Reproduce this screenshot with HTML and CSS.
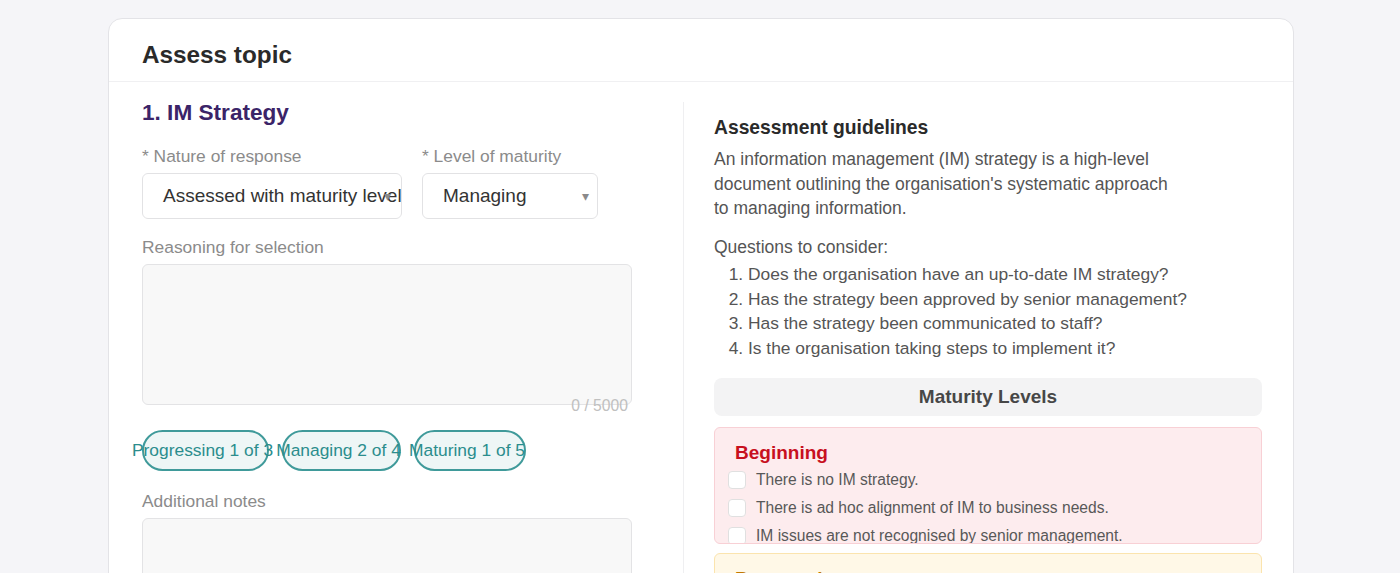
FILE: index.html
```html
<!DOCTYPE html>
<html lang="en">
<head>
    <meta charset="UTF-8">
    <meta name="viewport" content="width=device-width, initial-scale=1.0">
    <title>Assess topic</title>
    <link rel="stylesheet" href="styles.css">
</head>
<body>
    <div class="page">
        <div class="card">
            <header class="card-header">
                <h1>Assess topic</h1>
            </header>

            <div class="card-body">
                <section class="form-col">
                    <h2 class="topic-title">1. IM Strategy</h2>

                    <div class="field-row">
                        <div class="field">
                            <label class="field-label">* Nature of response</label>
                            <div class="select select-wide">
                                <span class="select-value">Assessed with maturity level</span>
                                <span class="select-arrow">&#9662;</span>
                            </div>
                        </div>
                        <div class="field">
                            <label class="field-label">* Level of maturity</label>
                            <div class="select select-narrow">
                                <span class="select-value">Managing</span>
                                <span class="select-arrow">&#9662;</span>
                            </div>
                        </div>
                    </div>

                    <div class="field">
                        <label class="field-label">Reasoning for selection</label>
                        <div class="textarea-wrap">
                            <div class="textarea"></div>
                            <span class="counter">0 / 5000</span>
                        </div>
                    </div>

                    <div class="pills">
                        <span class="pill pill-1"><span>Progressing 1 of 3</span></span>
                        <span class="pill pill-2"><span>Managing 2 of 4</span></span>
                        <span class="pill pill-3"><span>Maturing 1 of 5</span></span>
                    </div>

                    <div class="field">
                        <label class="field-label">Additional notes</label>
                        <div class="textarea"></div>
                    </div>
                </section>

                <section class="guide-col">
                    <h3 class="guide-title">Assessment guidelines</h3>
                    <p class="guide-text">An information management (IM) strategy is a high-level document outlining the organisation's systematic approach to managing information.</p>
                    <p class="guide-text guide-questions">Questions to consider:</p>
                    <ol class="question-list">
                        <li>Does the organisation have an up-to-date IM strategy?</li>
                        <li>Has the strategy been approved by senior management?</li>
                        <li>Has the strategy been communicated to staff?</li>
                        <li>Is the organisation taking steps to implement it?</li>
                    </ol>

                    <div class="levels-heading">Maturity Levels</div>

                    <div class="level level-beginning">
                        <h4 class="level-title">Beginning</h4>
                        <label class="level-item"><span class="checkbox"></span>There is no IM strategy.</label>
                        <label class="level-item"><span class="checkbox"></span>There is ad hoc alignment of IM to business needs.</label>
                        <label class="level-item"><span class="checkbox"></span>IM issues are not recognised by senior management.</label>
                    </div>

                    <div class="level level-progressing">
                        <h4 class="level-title">Progressing</h4>
                        <label class="level-item"><span class="checkbox"></span>An IM strategy is being developed.</label>
                    </div>
                </section>
            </div>
        </div>
    </div>
</body>
</html>
```

FILE: styles.css
```css
body {
    font-family: "Liberation Sans", Arial, sans-serif;
    margin: 0;
    padding: 0;
    background-color: #f5f5f8;
    height: 573px;
    overflow: hidden;
}
.page {
    padding: 18px 106px 0 108px;
}
.card {
    background-color: #fff;
    border: 1.5px solid #e3e3e7;
    border-radius: 14px;
    height: 600px;
    overflow: hidden;
}
.card-header {
    padding: 22px 33px 0;
    height: 40px;
    border-bottom: 1.5px solid #f0f0f2;
}
.card-header h1 {
    margin: 0;
    font-size: 24.3px;
    font-weight: bold;
    color: #2a2a2a;
}
.card-body {
    display: flex;
    padding: 20px 31px 0 33px;
}
.form-col {
    width: 490px;
    padding-right: 51px;
    border-right: 1.5px solid #efeff1;
}
.topic-title {
    margin: -2px 0 20px;
    font-size: 22.6px;
    font-weight: bold;
    color: #3b2468;
}
.field-row {
    display: flex;
    gap: 20px;
}
.field {
    margin-bottom: 18px;
}
.field-label {
    display: block;
    font-size: 17.4px;
    color: #8b8b8b;
    margin-bottom: 6px;
}
.select {
    position: relative;
    box-sizing: border-box;
    height: 46px;
    border: 1.5px solid #e2e2e4;
    border-radius: 6px;
    display: flex;
    align-items: center;
    padding-left: 20px;
    font-size: 19px;
    color: #333;
    overflow: hidden;
    white-space: nowrap;
}
.select-wide {
    width: 260px;
}
.select-wide .select-arrow {
    position: absolute;
    right: 10px;
    top: 14px;
}
.select-narrow {
    width: 176px;
    justify-content: space-between;
    padding-right: 8px;
}
.select-arrow {
    font-size: 14px;
    color: #8a8a8a;
}
.textarea-wrap {
    position: relative;
}
.textarea {
    box-sizing: border-box;
    height: 141px;
    background-color: #f8f8f8;
    border: 1.5px solid #e3e3e5;
    border-radius: 6px;
}
.counter {
    position: absolute;
    right: 4px;
    bottom: -10px;
    font-size: 15.7px;
    color: #c0c0c0;
}
.pills {
    display: flex;
    gap: 13px;
    margin: 25px 0 20px;
}
.pill {
    box-sizing: border-box;
    height: 41px;
    padding-right: 6px;
    border: 2px solid #3f9a9a;
    border-radius: 21px;
    background-color: #eef6f6;
    color: #2b8d8d;
    font-size: 17.4px;
    display: flex;
    align-items: center;
    justify-content: center;
    white-space: nowrap;
}
.pill-1 {
    width: 127px;
}
.pill-2 {
    width: 119px;
}
.pill-3 {
    width: 112px;
}
.guide-col {
    flex: 1;
    padding: 15px 0 0 30px;
}
.guide-title {
    margin: 0 0 8px;
    font-size: 19.3px;
    font-weight: bold;
    color: #2a2a2a;
}
.guide-text {
    margin: 0 0 14px;
    max-width: 470px;
    font-size: 17.5px;
    line-height: 24.5px;
    color: #555;
}
.guide-questions {
    margin-bottom: 3px;
}
.question-list {
    margin: 0 0 18px;
    padding-left: 34px;
    font-size: 17.4px;
    line-height: 24.5px;
    color: #555;
}
.levels-heading {
    background-color: #f3f3f4;
    border-radius: 8px;
    height: 38px;
    line-height: 38px;
    text-align: center;
    font-size: 19px;
    font-weight: bold;
    color: #474747;
    margin-bottom: 11px;
}
.level {
    box-sizing: border-box;
    height: 117px;
    overflow: hidden;
    border-radius: 6px;
    padding: 14px 13px 0;
    margin-bottom: 9px;
}
.level-beginning {
    background-color: #fdecee;
    border: 1.5px solid #f8d0d5;
}
.level-progressing {
    background-color: #fff8e7;
    border: 1.5px solid #fbe4ae;
}
.level-title {
    margin: 0 0 2px 7px;
    font-size: 19px;
    font-weight: bold;
}
.level-beginning .level-title {
    color: #c8101e;
}
.level-progressing .level-title {
    color: #c27800;
}
.level-item {
    display: flex;
    align-items: center;
    gap: 10px;
    height: 28px;
    font-size: 15.6px;
    color: #585858;
}
.checkbox {
    box-sizing: border-box;
    width: 18px;
    height: 18px;
    background-color: #fff;
    border: 1.5px solid #e0e0e0;
    border-radius: 4px;
}
```
